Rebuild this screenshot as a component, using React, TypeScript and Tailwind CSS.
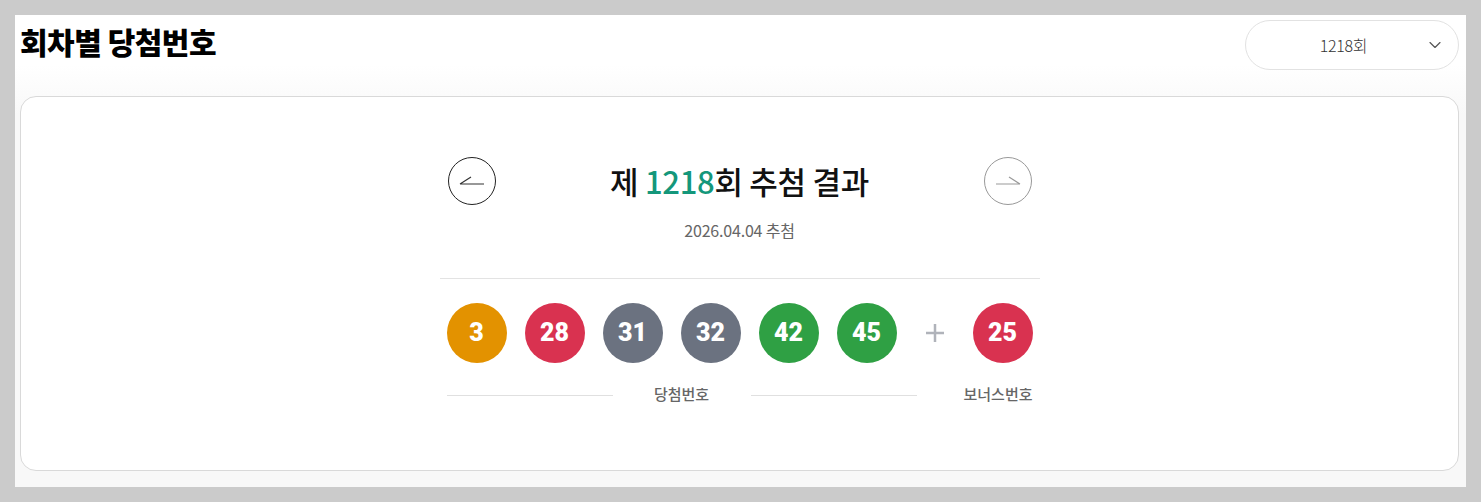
import { ChevronDown } from "lucide-react";

const font = { fontFamily: '"Noto Sans CJK KR", "Noto Sans", sans-serif' };

// winning numbers for the round
const balls = [
  { n: 3, color: "bg-[#e39200]" },
  { n: 28, color: "bg-[#d93250]" },
  { n: 31, color: "bg-[#6b7280]" },
  { n: 32, color: "bg-[#6b7280]" },
  { n: 42, color: "bg-[#2fa044]" },
  { n: 45, color: "bg-[#2fa044]" },
];

const Ball = ({ n, color }: { n: number; color: string }) => (
  <div
    className={`${color} w-[60px] h-[60px] rounded-full flex items-center justify-center text-white text-[25px] font-black`}
    style={{ fontFamily: 'Roboto, "Noto Sans", sans-serif' }}
  >
    {n}
  </div>
);

const ArrowBtn = ({ dir }: { dir: "prev" | "next" }) => (
  <button
    className={`w-[48px] h-[48px] rounded-full border flex items-center justify-center ${
      dir === "prev" ? "border-[#222]" : "border-[#999]"
    }`}
  >
    <svg width="28" height="14" viewBox="0 0 28 14" fill="none">
      {dir === "prev" ? (
        <path d="M2 10h24M2 10l11-7" stroke="#333" strokeWidth="1.2" />
      ) : (
        <path d="M2 10h24M26 10l-11-7" stroke="#999" strokeWidth="1.2" />
      )}
    </svg>
  </button>
);

export default function App() {
  return (
    <div className="w-[1481px] h-[502px] bg-[#cbcbcb] p-[15px]" style={font}>
      <div className="w-full h-full bg-[linear-gradient(to_bottom,#ffffff_50px,#f8f8f8_100px)] flex flex-col pl-[5px] pr-[7px] pt-[5px] pb-[16px]">
        <div className="flex justify-between items-start">
          <h2 className="text-[30px] leading-[40px] font-black text-black tracking-[-0.5px] mt-[1px]">
            회차별 당첨번호
          </h2>
          <button className="w-[214px] h-[50px] rounded-full border border-[#e2e2e2] bg-white flex items-center relative">
            <span className="flex-1 text-center text-[16px] font-light text-[#333] pr-[17px] tracking-[-0.3px]">1218회</span>
            <ChevronDown className="absolute right-[13px] text-[#555]" size={20} strokeWidth={1.4} />
          </button>
        </div>

        <div className="mt-[26px] flex-1 rounded-[16px] border border-[#d9d9d9] bg-white flex justify-center">
          <div className="w-[600px] flex flex-col pt-[60px]">
            <div className="flex justify-between items-center px-[8px]">
              <ArrowBtn dir="prev" />
              <h3 className="text-[31px] font-medium text-[#111] leading-[40px] tracking-[-0.3px]">
                제 <span className="text-[#14977b]">1218</span>회 추첨 결과
              </h3>
              <ArrowBtn dir="next" />
            </div>
            <p className="text-center text-[16px] text-[#666] mt-[14px] leading-[22px] tracking-[-0.2px]">2026.04.04 추첨</p>

            <div className="border-t border-[#e3e3e3] mt-[37px]" />

            <div className="flex items-center px-[7px] mt-[24px]">
              <div className="flex gap-[18px]">
                {balls.map((b) => (
                  <Ball key={b.n} n={b.n} color={b.color} />
                ))}
              </div>
              <div className="w-[76px] flex justify-center">
                <svg width="20" height="20" viewBox="0 0 20 20">
                  <path d="M10 1v18M1 10h18" stroke="#b0b3ba" strokeWidth="2.5" />
                </svg>
              </div>
              <Ball n={25} color="bg-[#d93250]" />
            </div>

            <div className="flex items-center px-[7px] mt-[20px]">
              <div className="w-[470px] flex items-center">
                <div className="flex-1 border-t border-[#e0e0e0] mt-[2px]" />
                <span className="w-[138px] text-center text-[15px] font-medium text-[#666]">당첨번호</span>
                <div className="flex-1 border-t border-[#e0e0e0] mt-[2px]" />
              </div>
              <span className="flex-1 text-right text-[15px] font-medium text-[#666]">보너스번호</span>
            </div>
          </div>
        </div>
      </div>
    </div>
  );
}
